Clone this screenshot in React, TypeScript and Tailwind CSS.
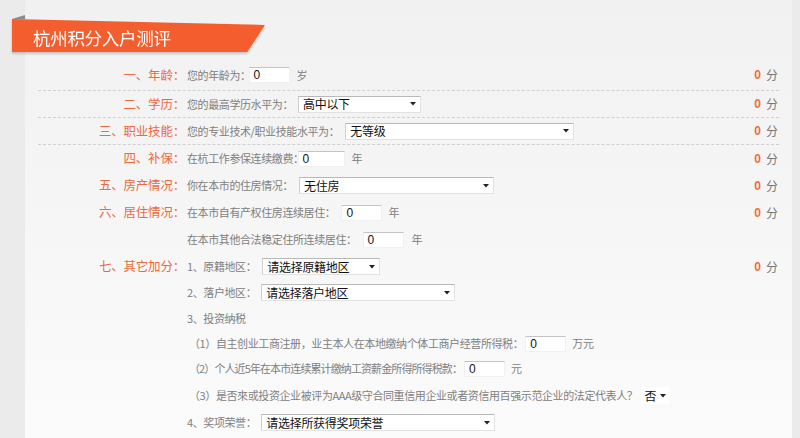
import React from "react";

const Arrow = () => (
  <svg width="6" height="4" viewBox="0 0 6 4" className="shrink-0">
    <path d="M0 0 L6 0 L3 3.5 Z" fill="#222" />
  </svg>
);

function Sel({ text, w }: { text: string; w: string }) {
  return (
    <div
      className={`${w} h-[17px] bg-white border border-[#e2e2e2] border-t-[#b9b9b9] border-l-[#cfcfcf] flex items-center justify-between pl-[4px] pr-[4px] text-[12px] text-[#111] tracking-[-0.3px]`}
    >
      <span>{text}</span>
      <Arrow />
    </div>
  );
}

function Inp({ w }: { w: string }) {
  return (
    <div
      className={`${w} h-[16px] bg-white border border-[#f0f0f0] border-t-[#c4c4c4] flex items-center pl-[4px] text-[12px] text-[#111] font-['Liberation_Sans']`}
    >
      0
    </div>
  );
}

function Score() {
  return (
    <div className="flex items-center gap-[5px] pr-[1px]">
      <span className="text-[12px] font-bold text-[#e8703e] font-['Liberation_Sans']">0</span>
      <span className="text-[12px] text-[#777]">分</span>
    </div>
  );
}

function Row({
  label,
  children,
  score,
  cls,
}: {
  label?: string;
  children: React.ReactNode;
  score?: boolean;
  cls: string;
}) {
  return (
    <div className={`flex items-center ${cls}`}>
      <div className="w-[147px] shrink-0 text-right text-[12.5px] tracking-[-0.2px] text-[#ec6a3e]">
        {label}
      </div>
      <div className="ml-[2px] flex-1 flex items-center text-[11px] tracking-[-0.4px] text-[#808080]">
        {children}
      </div>
      {score && <Score />}
    </div>
  );
}

export default function App() {
  return (
    <div className="w-[800px] h-[438px] bg-[#ebebeb] overflow-hidden font-['Noto_Sans_CJK_SC',sans-serif]">
      <div className="ml-[25px] w-[767px] h-full bg-gradient-to-b from-[#f1f1f1] to-[#fbfbfb] pt-[19px] flex flex-col">
        <div className="relative -ml-[13px] w-[253px] h-[33px] [filter:drop-shadow(0_2px_1px_rgba(0,0,0,0.18))]">
          <div className="absolute left-0 -top-[4px] w-[13px] h-[4px] bg-[#8a8a8a] [clip-path:polygon(100%_0,100%_100%,0_100%)]" />
          <div className="w-full h-full bg-[#f45e2f] [clip-path:polygon(0_0,100%_18%,93%_100%,0_100%)] flex items-center pl-[21px] pt-[6px]">
            <span className="text-white text-[17.5px] tracking-[-0.3px]">杭州积分入户测评</span>
          </div>
        </div>

        <div className="mt-[12px] mx-[13px] flex flex-col">
          <Row label="一、年龄：" score cls="h-[27px] pb-[4px] border-b border-dashed border-[#d0d0d0]">
            <span>您的年龄为：</span>
            <div className="-ml-[2px]"><Inp w="w-[41px]" /></div>
            <span className="ml-[7px]">岁</span>
          </Row>
          <Row label="二、学历：" score cls="h-[27px] border-b border-dashed border-[#d0d0d0]">
            <span>您的最高学历水平为：</span>
            <div className="ml-[5px]"><Sel text="高中以下" w="w-[123px]" /></div>
          </Row>
          <Row label="三、职业技能：" score cls="h-[27px] border-b border-dashed border-[#d0d0d0]">
            <span>您的专业技术/职业技能水平为：</span>
            <div className="ml-[6px]"><Sel text="无等级" w="w-[229px]" /></div>
          </Row>
          <Row label="四、补保：" score cls="h-[27px]">
            <span>在杭工作参保连续缴费：</span>
            <div className="-ml-[6px]"><Inp w="w-[47px]" /></div>
            <span className="ml-[7px]">年</span>
          </Row>
          <Row label="五、房产情况：" score cls="h-[27px]">
            <span>你在本市的住房情况：</span>
            <div className="ml-[6px]"><Sel text="无住房" w="w-[195px]" /></div>
          </Row>
          <Row label="六、居住情况：" score cls="h-[27px]">
            <span>在本市自有产权住房连续居住：</span>
            <div className="ml-[6px]"><Inp w="w-[41px]" /></div>
            <span className="ml-[6px]">年</span>
          </Row>
          <Row cls="h-[27px]">
            <span>在本市其他合法稳定住所连续居住：</span>
            <div className="ml-[6px]"><Inp w="w-[41px]" /></div>
            <span className="ml-[8px]">年</span>
          </Row>
          <Row label="七、其它加分：" score cls="h-[27px]">
            <span>1、原籍地区：</span>
            <div className="ml-[6px]"><Sel text="请选择原籍地区" w="w-[118px]" /></div>
          </Row>
          <Row cls="h-[25px]">
            <span>2、落户地区：</span>
            <div className="ml-[5px]"><Sel text="请选择落户地区" w="w-[194px]" /></div>
          </Row>
          <Row cls="h-[26px]">
            <span>3、投资纳税</span>
          </Row>
          <Row cls="h-[25px]">
            <span className="ml-[2px]">（1）自主创业工商注册，业主本人在本地缴纳个体工商户经营所得税：</span>
            <div className="ml-[2px]"><Inp w="w-[41px]" /></div>
            <span className="ml-[6px]">万元</span>
          </Row>
          <Row cls="h-[25px]">
            <span className="ml-[2px] tracking-[-0.9px]">（2）个人近5年在本市连续累计缴纳工资薪金所得所得税款：</span>
            <div className="ml-[2px]"><Inp w="w-[41px]" /></div>
            <span className="ml-[6px]">元</span>
          </Row>
          <Row cls="h-[29px]">
            <span className="ml-[2px]">（3）是否來或投资企业被评为AAA级守合同重信用企业或者资信用百强示范企业的法定代表人？</span>
            <div className="ml-[4px] h-[17px] bg-white flex items-center gap-[4px] px-[3px] text-[12px] text-[#111]">
              <span>否</span>
              <Arrow />
            </div>
          </Row>
          <Row cls="h-[25px]">
            <span>4、奖项荣誉：</span>
            <div className="ml-[5px]"><Sel text="请选择所获得奖项荣誉" w="w-[234px]" /></div>
          </Row>
        </div>
      </div>
    </div>
  );
}
